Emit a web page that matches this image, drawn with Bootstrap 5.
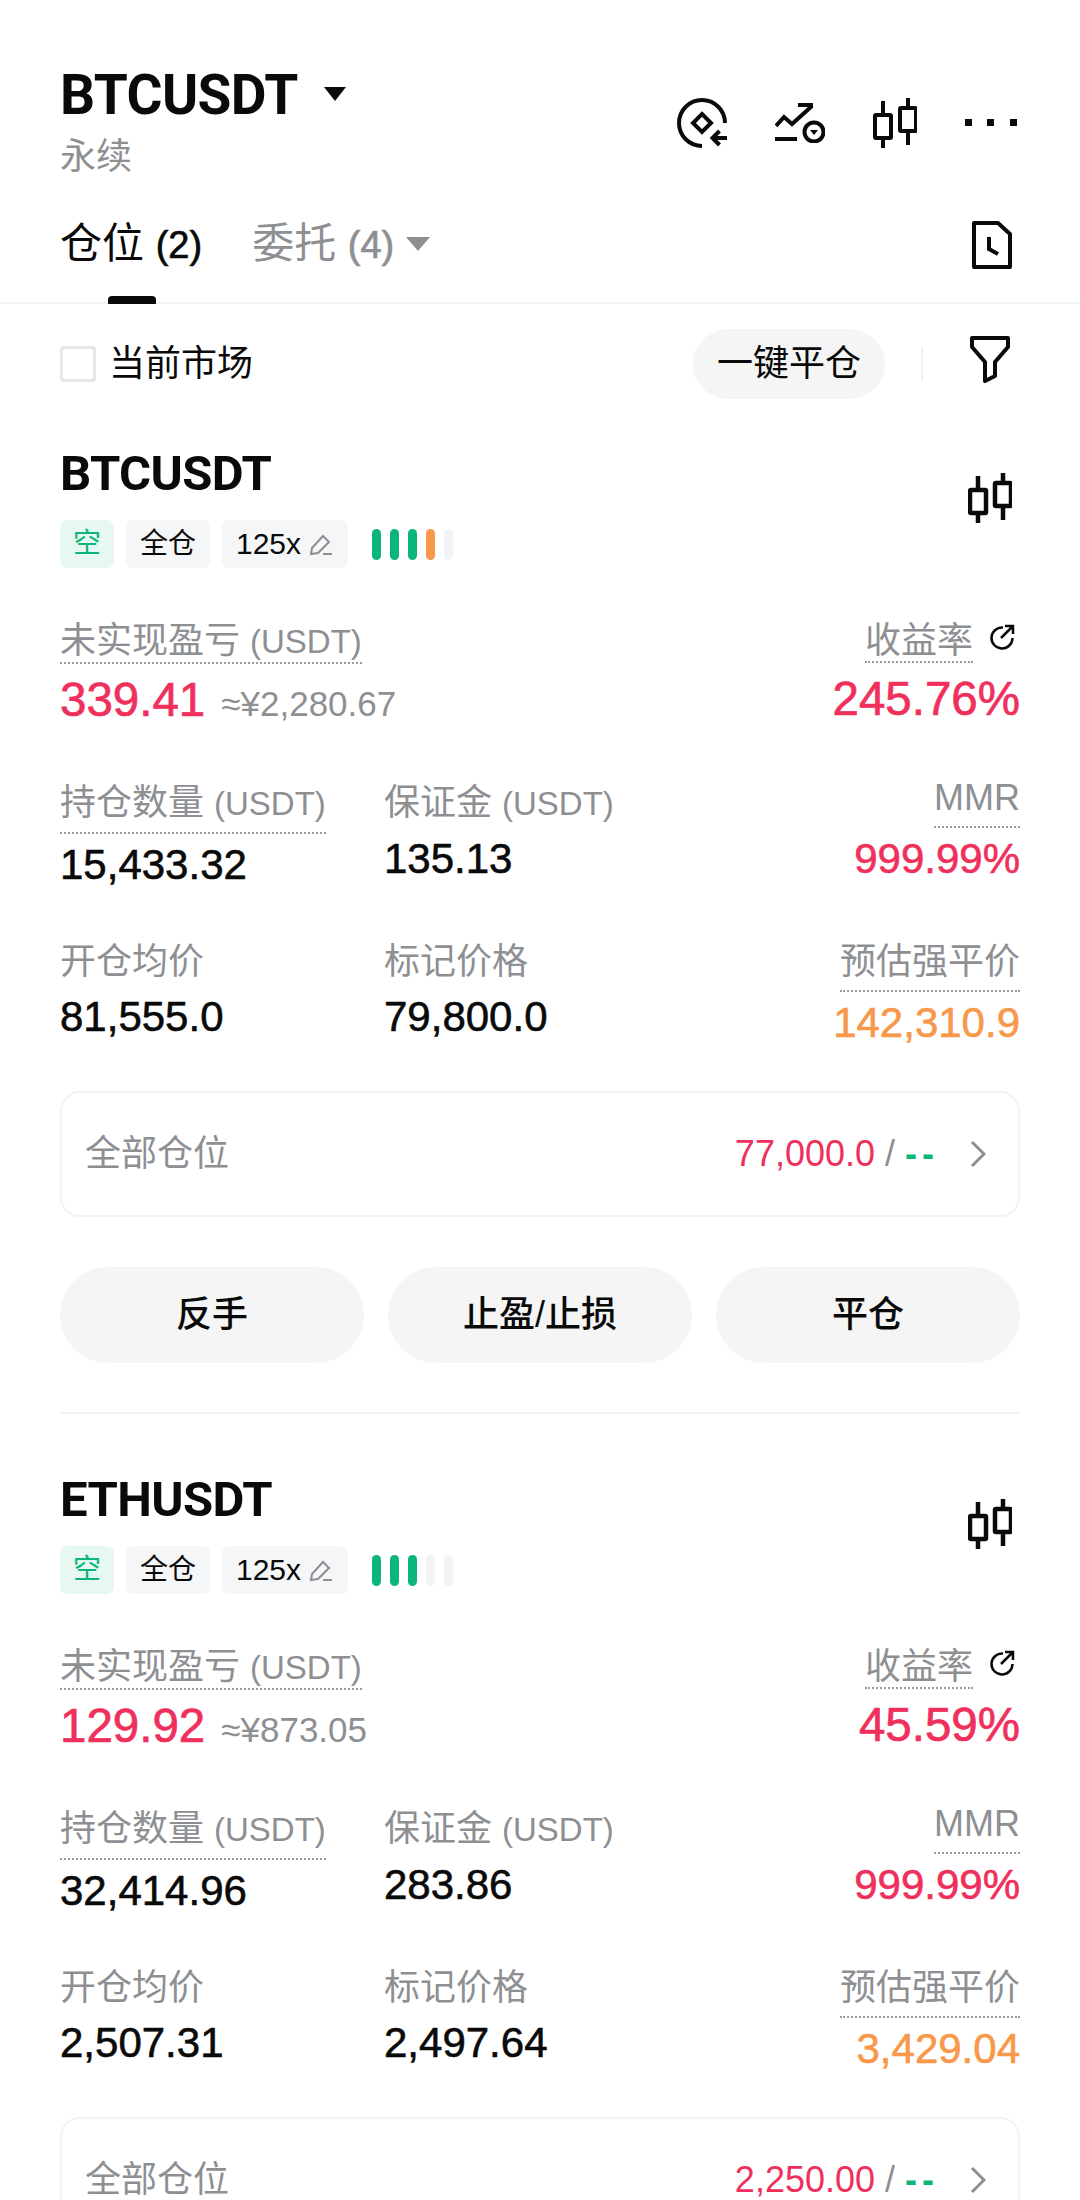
<!DOCTYPE html>
<html lang="zh-CN">
<head>
  <meta charset="UTF-8"><meta name="viewport" content="width=device-width, initial-scale=1">
  <title>BTCUSDT 仓位</title>
  <link href="https://cdn.jsdelivr.net/npm/bootstrap@5.3.0/dist/css/bootstrap.min.css" rel="stylesheet">
  <style>
    body{font-family:"Liberation Sans","Noto Sans CJK SC",sans-serif;color:#0a0a0a;background:#fff}
    svg{display:block;fill:none;stroke:#0a0a0a;stroke-width:4}
    .page{height:2200px;overflow:hidden}
    .gray{color:#8d8f93}.red{color:#f0305c}.green{color:#0cb678}.orange{color:#f7984a}
    .top-bar{padding:66px 60px 0}
    .pair{font-family:Roboto,sans-serif;font-size:55px;line-height:58px;font-weight:700;letter-spacing:-.6px}
    .caret{width:0;height:0;border-left:11px solid transparent;border-right:11px solid transparent;border-top:14px solid #0a0a0a;margin-left:26px;margin-top:-2px}
    .caret-gray{border-left-width:12px;border-right-width:12px;border-top-color:#8d8f93;margin-left:12px}
    .sub{font-size:36px;line-height:44px;margin-top:11px}
    .top-icons{gap:48px;padding-right:3px}
    .tabs{padding:40px 60px 32px;border-bottom:2px solid #f2f3f5}
    .tab{font-size:42px;line-height:50px}
    .tab b{font-size:38px;font-weight:400;-webkit-text-stroke:.7px currentColor}
    .tab-mark{left:108px;bottom:-2px;width:48px;height:8px;border-radius:4px 4px 0 0;background:#0a0a0a}
    .tab-gap{margin-left:50px}
    .filter-row{padding:25px 60px 0}
    .check{width:36px;height:36px;margin:0 13px 0 0;border:3px solid #e6e7e9;border-radius:5px}
    .check-label{font-size:36px}
    .pill-btn{width:192px;height:70px;font-size:36px;padding:0;color:#0a0a0a;background:#f5f5f5;border:0;border-radius:35px}
    .sep{width:2px;height:34px;background:#eff0f1;margin:0 47px 0 36px}
    .filter-icon{margin:0 10px 10px 0}
    .pos{padding:49px 60px 0}
    .pos + .pos{padding-top:60px}
    .pos-name{font-family:Roboto,sans-serif;font-size:49px;line-height:52px;font-weight:700;letter-spacing:-.6px}
    .chips{gap:12px;margin-top:20px}
    .chip{height:48px;border-radius:7px;background:#f5f6f7;font-size:28px;line-height:48px;text-align:center}
    .chip-short{width:54px;background:#e6f8f1;color:#0cb678}
    .chip-mode{width:84px}
    .chip-num{width:126px;padding-left:14px;font-size:30px}
    .bars{gap:9px;margin-left:12px}
    .bar{width:9px;height:31px;border-radius:5px;background:#f2f3f5}
    .bar.on{background:#0cb678}.bar.warn{background:#f7984a}
    .pos-candle{margin:0 8px 20px 0;stroke-width:4.500}
    .stats{margin-top:53px}
    .row.stats{margin-top:53px}
    .col-first{flex:0 0 324px}
    .cell-up{margin-top:-5px}
    .lbl{font-size:36px;line-height:40px}
    .lbl small{font-size:33px;margin-left:10px}
    .dotted{display:inline-block;border-bottom:2px dotted #9a9c9f}
    .lbl-gap{padding-bottom:8px}
    .val{font-size:42px;line-height:48px;margin-top:11px;-webkit-text-stroke:.6px currentColor}
    .val-near{margin-top:7px}
    .val-right{margin-top:7px}
    .val-big{font-size:47.500px;line-height:52px;margin-top:10px;-webkit-text-stroke:.7px currentColor}
    .approx{font-size:35px;margin-left:16px;-webkit-text-stroke:0}
    .share{margin:3px 5px 0 0;stroke-width:2.500}
    .all-pos{height:126px;margin-top:44px;padding:0 32px 0 23px;border:2px solid #f2f3f5;border-radius:20px;font-size:36px}
    .dash{font-weight:700;letter-spacing:5px;margin-right:-5px}
    .chev{margin-left:36px;stroke:#8d8f93;stroke-width:3}
    .act-row{gap:24px;margin-top:50px}
    .act-btn{height:96px;flex:1 1 0;font-size:36px;font-weight:500;color:#0a0a0a;background:#f5f5f5;border:0;border-radius:48px;padding:0}
    .pos-line{height:2px;margin-top:49px;background:#f2f3f5}
  </style>
</head>
<body>
<div class="page">
  <div class="top-bar d-flex justify-content-between align-items-center">
    <div>
      <div class="d-flex align-items-center"><span class="pair">BTCUSDT</span><span class="caret"></span></div>
      <div class="sub gray">永续</div>
    </div>
    <div class="top-icons d-flex align-items-center">
      <svg width="50" height="50" viewBox="0 0 50 50"><path d="M48 25A23 23 0 1 0 25 48"/><path d="M25 16l9 9-9 9-9-9z"/><path d="M50 40H36M42.500 33l-7 7 7 7"/></svg>
      <svg width="50" height="40" viewBox="0 0 50 40"><path d="M1 23l8-9 8 7L37 3M23 2h15M0 36h22"/><circle cx="39" cy="29" r="9.500"/><path d="M35 27h8l-4 5z" fill="#0a0a0a" stroke="none"/></svg>
      <svg width="44" height="50" viewBox="0 0 44 50" stroke-width="4.500"><rect x="2" y="17" width="16" height="23" rx="1"/><rect x="27" y="10" width="16" height="23" rx="1"/><path d="M10 3v14M10 40v10M35 0v10M35 33v14"/></svg>
      <svg width="52" height="8" viewBox="0 0 52 8"><path d="M0 0h7v7H0zM22 0h7v7h-7zM45 0h7v7h-7z" fill="#0a0a0a" stroke="none"/></svg>
    </div>
  </div>

  <div class="tabs d-flex align-items-center position-relative">
    <span class="tab">仓位 <b>(2)</b></span>
    <span class="tab gray tab-gap">委托 <b>(4)</b></span>
    <span class="caret caret-gray"></span>
    <span class="tab-mark position-absolute"></span>
    <svg class="ms-auto me-2" width="40" height="48" viewBox="0 0 40 48"><path d="M2 2h24l12 11v33H2z" stroke-linejoin="round"/><path d="M17 16v12l9 5"/></svg>
  </div>

  <div class="filter-row d-flex align-items-center">
    <input class="form-check-input check" type="checkbox" id="cur">
    <label class="check-label" for="cur">当前市场</label>
    <button class="btn pill-btn ms-auto">一键平仓</button>
    <span class="sep"></span>
    <svg class="filter-icon" width="40" height="47" viewBox="0 0 40 47"><path d="M2 2h36v9L25 26v14l-10 5V26L2 11z" stroke-linejoin="round"/></svg>
  </div>

  <div id="positions"></div>
</div>

<script src="https://cdn.jsdelivr.net/npm/bootstrap@5.3.0/dist/js/bootstrap.bundle.min.js"></script>
<script>
  const candle = '<svg class="pos-candle" width="44" height="50" viewBox="0 0 44 50"><rect x="2" y="17" width="16" height="23" rx="1"/><rect x="27" y="10" width="16" height="23" rx="1"/><path d="M10 3v14M10 40v10M35 0v10M35 33v14"/></svg>';
  const items = [
    { name: "BTCUSDT", bars: ["on","on","on","warn",""], pnl: "339.41", cny: "≈¥2,280.67", roe: "245.76%", size: "15,433.32", margin: "135.13",
      open: "81,555.0", mark: "79,800.0", liq: "142,310.9", tp: "77,000.0" },
    { name: "ETHUSDT", bars: ["on","on","on","",""], pnl: "129.92", cny: "≈¥873.05", roe: "45.59%", size: "32,414.96", margin: "283.86",
      open: "2,507.31", mark: "2,497.64", liq: "3,429.04", tp: "2,250.00" }
  ];
  // the second position runs off the bottom of the screen, so its buttons never show
  document.getElementById("positions").innerHTML = items.map((i, idx) => `
    <div class="pos">
      <div class="d-flex justify-content-between align-items-center">
        <div>
          <div class="pos-name">${i.name}</div>
          <div class="chips d-flex align-items-center">
            <span class="chip chip-short">空</span>
            <span class="chip chip-mode">全仓</span>
            <span class="chip chip-num d-flex align-items-center gap-2">125x
              <svg width="24" height="24" viewBox="0 0 24 24" style="stroke:#8d8f93;stroke-width:2"><path d="M2 22l1-6L14 4l6 6L9 21zM14 22h9"/></svg>
            </span>
            <span class="bars d-flex">${i.bars.map(b => `<span class="bar ${b}"></span>`).join("")}</span>
          </div>
        </div>
        ${candle}
      </div>

      <div class="stats d-flex justify-content-between">
        <div>
          <div class="lbl gray"><span class="dotted">未实现盈亏<small>(USDT)</small></span></div>
          <div class="val-big red">${i.pnl}<span class="approx gray">${i.cny}</span></div>
        </div>
        <div class="text-end">
          <div class="lbl gray d-flex align-items-start justify-content-end gap-3"><span class="dotted">收益率</span>
            <svg class="share" width="26" height="26" viewBox="0 0 26 26"><path d="M14 3.500A10.500 10.500 0 1 0 23.500 14M12 14L24 2M16 2h8v8"/></svg>
          </div>
          <div class="val-big red">${i.roe}</div>
        </div>
      </div>

      <div class="stats row g-0">
        <div class="col-first">
          <div class="lbl gray"><span class="dotted lbl-gap">持仓数量<small>(USDT)</small></span></div>
          <div class="val val-near">${i.size}</div>
        </div>
        <div class="col">
          <div class="lbl gray">保证金<small>(USDT)</small></div>
          <div class="val">${i.margin}</div>
        </div>
        <div class="col text-end cell-up">
          <div class="lbl gray"><span class="dotted lbl-gap">MMR</span></div>
          <div class="val val-near red">999.99%</div>
        </div>
      </div>

      <div class="stats row g-0">
        <div class="col-first">
          <div class="lbl gray">开仓均价</div>
          <div class="val">${i.open}</div>
        </div>
        <div class="col">
          <div class="lbl gray">标记价格</div>
          <div class="val">${i.mark}</div>
        </div>
        <div class="col text-end">
          <div class="lbl gray"><span class="dotted lbl-gap">预估强平价</span></div>
          <div class="val val-right orange">${i.liq}</div>
        </div>
      </div>

      <div class="all-pos card flex-row align-items-center">
        <span class="gray">全部仓位</span>
        <span class="ms-auto text-nowrap"><span class="red">${i.tp}</span><span class="gray"> / </span><span class="green dash">--</span></span>
        <svg class="chev" width="16" height="28" viewBox="0 0 16 28"><path d="M2 2l12 12L2 26"/></svg>
      </div>
      ${idx === 0 ? `
      <div class="act-row d-flex">
        <button class="btn act-btn">反手</button>
        <button class="btn act-btn">止盈/止损</button>
        <button class="btn act-btn">平仓</button>
      </div>
      <div class="pos-line"></div>` : ""}
    </div>`).join("");
</script>
</body>
</html>
